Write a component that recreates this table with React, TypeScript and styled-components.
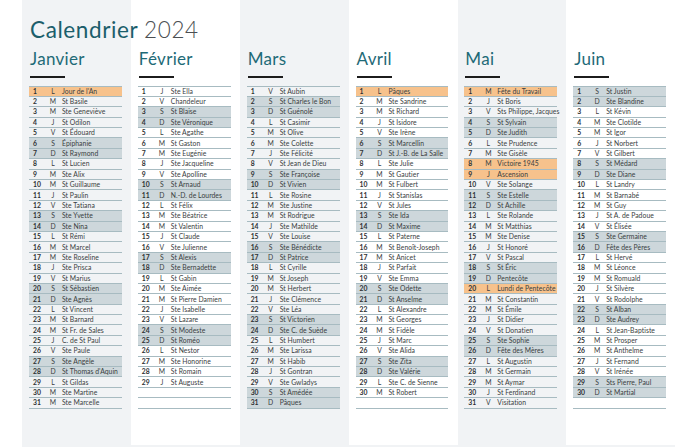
import styled, { createGlobalStyle } from 'styled-components'

const GlobalStyle = createGlobalStyle`
  html, body {
    margin: 0;
    padding: 0;
    background: #ffffff;
  }
  body {
    width: 700px;
    height: 448px;
    overflow: hidden;
    font-family: Lato, 'Noto Sans', 'Liberation Sans', sans-serif;
  }
`

const Page = styled.div`
  width: 700px;
  height: 448px;
  padding-left: 22px;
  box-sizing: border-box;
`

// gray / white stripes, white stripes stop 2px above the bottom edge
const Board = styled.div`
  width: 653px;
  height: 447px;
  box-sizing: border-box;
  padding-top: 19px;
  background-color: #f1f3f5;
  background-image: linear-gradient(
    to right,
    transparent 0 109px,
    #ffffff 109px 218px,
    transparent 218px 327px,
    #ffffff 327px 436px,
    transparent 436px 544px,
    #ffffff 544px 653px
  );
  background-size: 100% 445px;
  background-repeat: no-repeat;
`

const Title = styled.h1`
  margin: 0;
  padding-left: 8px;
  font-size: 22.5px;
  line-height: 22.5px;
  font-weight: 400;
  color: #1b5e6b;
  letter-spacing: 0.6px;
`

const Year = styled.span`
  color: #4b4f52;
  font-weight: 300;
`

const MonthsGrid = styled.div`
  display: grid;
  grid-template-columns: repeat(6, 1fr);
  margin-top: 8px;
`

const MonthColumn = styled.section`
  padding: 0 9px 0 7px;
  min-width: 0;
`

const MonthName = styled.h2`
  margin: 0;
  padding-left: 1px;
  font-size: 17px;
  line-height: 17px;
  font-weight: 400;
  letter-spacing: 0.3px;
  color: #1e6a77;
`

const Rule = styled.div`
  width: 35px;
  height: 1.5px;
  margin: 9.5px 0 0 1px;
  background: #1c1c1c;
`

const Table = styled.div`
  margin-top: 8px;
  border-top: 1px solid #a7bbc1;
`

type Tone = 'holiday' | 'weekend' | 'plain'

const toneBg: Record<Tone, string> = {
  holiday: '#f7c28c',
  weekend: '#cdd7db',
  plain: 'transparent',
}

const Row = styled.div<{ $tone: Tone }>`
  display: grid;
  grid-template-columns: 14px 12px 1fr;
  align-items: center;
  height: 10.4px;
  box-sizing: border-box;
  padding-left: 4px;
  border-bottom: 1px solid #a7bbc1;
  background: ${({ $tone }) => toneBg[$tone]};
  font-size: 6.8px;
  line-height: 9px;
  color: #3a3e41;
  white-space: nowrap;
`

const DayNum = styled.span`
  font-weight: 700;
  color: #2e3133;
`

const DayLetter = styled.span`
  text-align: center;
`

const Saint = styled.span`
  padding-left: 3px;
  letter-spacing: 0.05px;
`

const LETTERS = ['D', 'L', 'M', 'M', 'J', 'V', 'S']

const MONTHS: { name: string; holidays: number[]; saints: string[] }[] = [
  {
    name: 'Janvier',
    holidays: [1],
    saints: [
      "Jour de l'An", 'St Basile', 'Ste Geneviève', 'St Odilon', 'St Édouard', 'Épiphanie', 'St Raymond',
      'St Lucien', 'Ste Alix', 'St Guillaume', 'St Paulin', 'Ste Tatiana', 'Ste Yvette', 'Ste Nina',
      'St Rémi', 'St Marcel', 'Ste Roseline', 'Ste Prisca', 'St Marius', 'St Sébastien', 'Ste Agnès',
      'St Vincent', 'St Barnard', 'St Fr. de Sales', 'C. de St Paul', 'Ste Paule', 'Ste Angèle',
      "St Thomas d'Aquin", 'St Gildas', 'Ste Martine', 'Ste Marcelle',
    ],
  },
  {
    name: 'Février',
    holidays: [],
    saints: [
      'Ste Ella', 'Chandeleur', 'St Blaise', 'Ste Véronique', 'Ste Agathe', 'St Gaston', 'Ste Eugénie',
      'Ste Jacqueline', 'Ste Apolline', 'St Arnaud', 'N.-D. de Lourdes', 'St Félix', 'Ste Béatrice',
      'St Valentin', 'St Claude', 'Ste Julienne', 'St Alexis', 'Ste Bernadette', 'St Gabin', 'Ste Aimée',
      'St Pierre Damien', 'Ste Isabelle', 'St Lazare', 'St Modeste', 'St Roméo', 'St Nestor',
      'Ste Honorine', 'St Romain', 'St Auguste',
    ],
  },
  {
    name: 'Mars',
    holidays: [],
    saints: [
      'St Aubin', 'St Charles le Bon', 'St Guénolé', 'St Casimir', 'St Olive', 'Ste Colette',
      'Ste Félicité', 'St Jean de Dieu', 'Ste Françoise', 'St Vivien', 'Ste Rosine', 'Ste Justine',
      'St Rodrigue', 'Ste Mathilde', 'Ste Louise', 'Ste Bénédicte', 'St Patrice', 'St Cyrille',
      'St Joseph', 'St Herbert', 'Ste Clémence', 'Ste Léa', 'St Victorien', 'Ste C. de Suède',
      'St Humbert', 'Ste Larissa', 'St Habib', 'St Gontran', 'Ste Gwladys', 'St Amédée', 'Pâques',
    ],
  },
  {
    name: 'Avril',
    holidays: [1],
    saints: [
      'Pâques', 'Ste Sandrine', 'St Richard', 'St Isidore', 'Ste Irène', 'St Marcellin',
      'St J.-B. de La Salle', 'Ste Julie', 'St Gautier', 'St Fulbert', 'St Stanislas', 'St Jules',
      'Ste Ida', 'St Maxime', 'St Paterne', 'St Benoît-Joseph', 'St Anicet', 'St Parfait', 'Ste Emma',
      'Ste Odette', 'St Anselme', 'St Alexandre', 'St Georges', 'St Fidèle', 'St Marc', 'Ste Alida',
      'Ste Zita', 'Ste Valérie', 'Ste C. de Sienne', 'St Robert',
    ],
  },
  {
    name: 'Mai',
    holidays: [1, 8, 9, 20],
    saints: [
      'Fête du Travail', 'St Boris', 'Sts Philippe, Jacques', 'St Sylvain', 'Ste Judith', 'Ste Prudence',
      'Ste Gisèle', 'Victoire 1945', 'Ascension', 'Ste Solange', 'Ste Estelle', 'St Achille',
      'Ste Rolande', 'St Matthias', 'Ste Denise', 'St Honoré', 'St Pascal', 'St Éric', 'Pentecôte',
      'Lundi de Pentecôte', 'St Constantin', 'St Émile', 'St Didier', 'St Donatien', 'Ste Sophie',
      'Fête des Mères', 'St Augustin', 'St Germain', 'St Aymar', 'St Ferdinand', 'Visitation',
    ],
  },
  {
    name: 'Juin',
    holidays: [],
    saints: [
      'St Justin', 'Ste Blandine', 'St Kévin', 'Ste Clotilde', 'St Igor', 'St Norbert', 'St Gilbert',
      'St Médard', 'Ste Diane', 'St Landry', 'St Barnabé', 'St Guy', 'St A. de Padoue', 'St Élisée',
      'Ste Germaine', 'Fête des Pères', 'St Hervé', 'St Léonce', 'St Romuald', 'St Silvère',
      'St Rodolphe', 'St Alban', 'Ste Audrey', 'St Jean-Baptiste', 'St Prosper', 'St Anthelme',
      'St Fernand', 'St Irénée', 'Sts Pierre, Paul', 'St Martial',
    ],
  },
]

const MonthTable = ({ index }: { index: number }) => {
  const month = MONTHS[index]
  return (
    <Table>
      {Array.from({ length: 31 }, (_, i) => {
        const day = i + 1
        const saint = month.saints[i]
        if (!saint) return <Row key={day} $tone="plain" />
        const weekday = new Date(2024, index, day).getDay()
        const tone: Tone = month.holidays.includes(day)
          ? 'holiday'
          : weekday === 0 || weekday === 6
            ? 'weekend'
            : 'plain'
        return (
          <Row key={day} $tone={tone}>
            <DayNum>{day}</DayNum>
            <DayLetter>{LETTERS[weekday]}</DayLetter>
            <Saint>{saint}</Saint>
          </Row>
        )
      })}
    </Table>
  )
}

export default function App() {
  return (
    <Page>
      <GlobalStyle />
      <Board>
        <Title>
          Calendrier <Year>2024</Year>
        </Title>
        <MonthsGrid>
          {MONTHS.map((m, i) => (
            <MonthColumn key={m.name}>
              <MonthName>{m.name}</MonthName>
              <Rule />
              <MonthTable index={i} />
            </MonthColumn>
          ))}
        </MonthsGrid>
      </Board>
    </Page>
  )
}
